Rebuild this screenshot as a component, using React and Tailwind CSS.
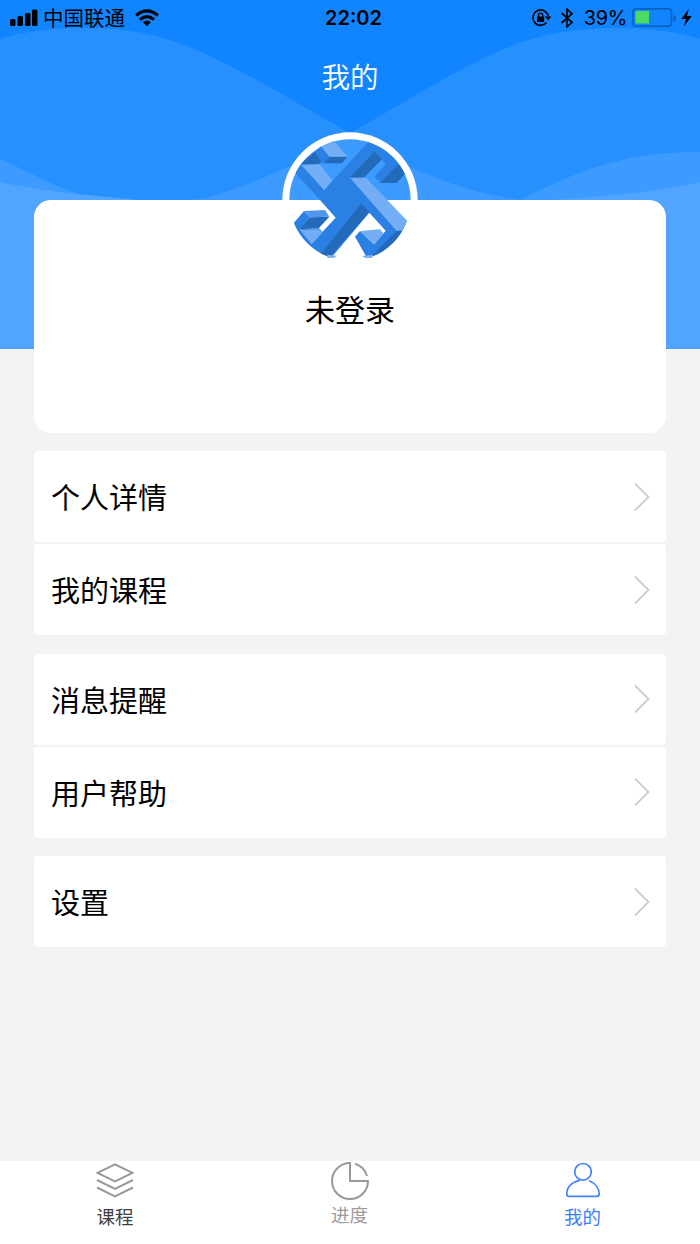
const menuGroups = [
  ["个人详情", "我的课程"],
  ["消息提醒", "用户帮助"],
  ["设置"],
];

function StatusBar() {
  return (
    <div className="flex h-9 items-center justify-between pl-[10px] pr-[8px] text-black">
      <div className="flex flex-1 items-center">
        <svg width="28" height="18" viewBox="0 0 28 18" fill="currentColor">
          <rect x="0" y="10" width="5.5" height="7" rx="1.6" />
          <rect x="7.5" y="7" width="5.5" height="10" rx="1.6" />
          <rect x="15" y="4" width="5.5" height="13" rx="1.6" />
          <rect x="22" y="0.5" width="5.5" height="16.5" rx="1.6" />
        </svg>
        <span className="-mt-0.5 ml-[5px] text-[20.5px] leading-9">中国联通</span>
        <svg className="ml-[10px]" width="24" height="18" viewBox="0 0 24 18">
          <g fill="none" stroke="currentColor" strokeWidth="3.2">
            <path d="M1.2 6.5Q12 -2.8 22.8 6.5" />
            <path d="M5 10.6Q12 4.6 19 10.6" />
          </g>
          <path d="M8 13.2Q12 10 16 13.2L12 17.2Z" fill="currentColor" />
        </svg>
      </div>
      <span className="ml-[5px] font-[Inter,sans-serif] text-[20px] font-semibold leading-9">
        22:02
      </span>
      <div className="flex flex-1 items-center justify-end">
        <svg width="20" height="18" viewBox="0 0 20 18">
          <path
            d="M16.3 7.5A7.7 7.7 0 1 0 14.6 13.6"
            fill="none"
            stroke="currentColor"
            strokeWidth="1.6"
          />
          <path d="M12.8 7.4H19.4L16.1 11.6Z" fill="currentColor" />
          <rect x="5" y="7.5" width="7.2" height="5.6" rx="0.8" fill="currentColor" />
          <path d="M6.5 8V6.2A2.1 2.1 0 0 1 10.7 6.2V8" fill="none" stroke="currentColor" strokeWidth="1.4" />
        </svg>
        <svg
          className="ml-[8px]"
          width="14"
          height="20"
          viewBox="0 0 14 20"
          fill="none"
          stroke="currentColor"
          strokeWidth="1.7"
        >
          <path d="M1.5 5L12 14.3L7 18.8V1.2L12 5.7L1.5 15" />
        </svg>
        <span className="ml-[10px] font-[Inter,sans-serif] text-[20px] leading-9 tracking-[-0.4px]">39%</span>
        <svg className="ml-[5px]" width="45" height="20" viewBox="0 0 45 20">
          <rect x="1" y="0.8" width="38.5" height="17.5" rx="3" fill="none" stroke="#0c5fb6" strokeWidth="1.6" />
          <rect x="3.5" y="3" width="13.5" height="12.5" fill="#4cd964" />
          <path d="M41.5 6.5Q44 7.5 44 10T41.5 13.5Z" fill="#0c5fb6" />
        </svg>
        <svg className="ml-[4px]" width="11" height="18" viewBox="0 0 11 18" fill="currentColor">
          <path d="M7.8 0L0.2 10H5L2.8 17.5L10.8 7H6Z" />
        </svg>
      </div>
    </div>
  );
}

function Waves() {
  return (
    <svg className="absolute inset-x-0 top-0" width="700" height="349" viewBox="0 0 700 349">
      <rect width="700" height="348.5" fill="#1185ff" />
      <path
        d="M0 39C40 26 115 22 170 40C225 58 290 100 350 133C410 100 470 59 525 41C585 22 660 26 700 39V348.5H0Z"
        fill="#2790ff"
      />
      <path
        d="M0 159C30 173 60 188 88 198C120 203 170 203 205 198C250 187 300 160 350 140C400 160 440 188 520 200C575 172 625 151 700 152V348.5H0Z"
        fill="#3d9bff"
      />
      <path d="M0 182C40 191 85 195 150 201H540C600 197 660 192 700 182V348.5H0Z" fill="#52a5ff" />
    </svg>
  );
}

function Avatar() {
  return (
    <svg className="block" width="136" height="136" viewBox="36 36 408 408">
      <defs>
        <clipPath id="face">
          <circle cx="240" cy="240" r="182" />
        </clipPath>
      </defs>
      <circle cx="240" cy="240" r="203" fill="#fff" />
      <g clipPath="url(#face)">
        <rect x="36" y="36" width="408" height="204" fill="#3d9bff" />
        <g fill="#2b80e3">
          <path d="M60 130L97 132L163 210L300 60L350 60L400 132H387L332 188L313 170L347 133L335 118L283 172L410 303V332L330 405L300 430L255 350L270 333L312 373L347 332L298 278L178 420L130 430L50 340L72 308L102 273L120 292L90 328L148 325L157 336L197 293L150 240L74 157Z" />
          <path d="M135 97L152 78L178 110L160 128H152Z" />
        </g>
        <g fill="#236abb">
          <path d="M90 133L135 95L154 125L146 133Z" />
          <path d="M178 110H232L216 130H160Z" />
          <path d="M240 172L313 95L335 118L283 172Z" />
          <path d="M385 132H400L412 155L380 189H331Z" />
          <path d="M274 250L298 276L172 420L146 410Z" />
          <path d="M120 292L178 290L146 325L88 328Z" />
          <path d="M379 332H420L360 410L295 420Z" />
        </g>
        <g fill="#73adf5">
          <path d="M153 78L190 60L232 110H178Z" />
          <path d="M94 135L149 133L187 181L163 211Z" />
          <path d="M240 173H288L414 305L400 332H379Z" />
          <path d="M270 333L330 328L340 340L312 373Z" />
          <path d="M90 330L148 328L157 338L125 373Z" />
        </g>
        <path d="M102 273L165 270L178 290L120 292Z" fill="#5096ec" />
        <path d="M36 416H444V444H36Z" fill="#fff" />
      </g>
      <path d="M172 404L200 407L192 414H172Z" fill="#7fb2ef" />
      <path d="M308 404L276 408L286 414H306Z" fill="#7fb2ef" />
    </svg>
  );
}

function MenuItem({ label }) {
  return (
    <button
      type="button"
      className="flex h-[91px] w-full items-center justify-between rounded-[4px] bg-white pl-[17px] pr-4"
    >
      <span className="-mt-px text-[29px] leading-[44px] text-black">{label}</span>
      <svg width="16" height="28" viewBox="0 0 16 28" fill="none" stroke="#cccccc" strokeWidth="1.8">
        <path d="M1 0.5L14.5 14L1 27.5" />
      </svg>
    </button>
  );
}

function TabBar() {
  return (
    <nav className="mt-auto flex h-[83px] bg-white pr-[4px] text-[18.5px] leading-6">
      <a className="flex w-[230px] flex-col items-center text-[#3f3f3f]">
        <svg className="mt-[2px]" width="38" height="38" viewBox="0 0 38 38" fill="none" stroke="#999999" strokeWidth="2">
          <path d="M1.5 9.8L19 1.3L36.5 9.8L19 18.3Z" />
          <path d="M1 17L19 25.8L37 17" />
          <path d="M1 24.5L19 33.3L37 24.5" />
        </svg>
        <span className="mt-[3px]">课程</span>
      </a>
      <a className="flex w-[239px] flex-col items-center text-[#9c9c9c]">
        <svg width="40" height="40" viewBox="0 0 40 40" fill="none" stroke="#999999" strokeWidth="2">
          <path d="M20 2A18 18 0 1 0 38 20H20Z" />
          <path d="M25 2.8A18 18 0 0 1 37 15" />
        </svg>
        <span className="mt-px">进度</span>
      </a>
      <a className="flex flex-1 flex-col items-center text-[#3a7efa]">
        <svg className="mt-[1px]" width="36" height="38" viewBox="0 0 36 38" fill="none" stroke="#3f82fa" strokeWidth="1.7">
          <circle cx="18" cy="9.8" r="8.3" />
          <path d="M15 18.3C7 20 1.8 25 1.8 32Q1.8 34.3 4 34.3H32Q34.2 34.3 34.2 32C34 26 30 20.8 24 18.8" />
        </svg>
        <span className="mt-1">我的</span>
      </a>
    </nav>
  );
}

export default function App() {
  return (
    <div className="relative flex h-[1244px] w-[700px] flex-col overflow-hidden bg-[#f2f3f5] font-['Noto_Sans_CJK_SC',sans-serif]">
      <Waves />
      <header className="relative h-[132px]">
        <StatusBar />
        <h1 className="mt-[18px] text-center text-[28.5px] font-[350] leading-[44px] text-white">我的</h1>
      </header>

      <main className="relative px-[34px] pt-[68px]">
        <section className="relative h-[233px] rounded-[17px] bg-white pt-[86px] text-center">
          <div className="absolute left-[248px] -top-[68px]">
            <Avatar />
          </div>
          <p className="relative text-[30px] leading-[44px] text-black">未登录</p>
        </section>

        <div className="mt-[18px] flex flex-col gap-[18.5px]">
          {menuGroups.map((group) => (
            <div key={group[0]} className="flex flex-col gap-[2px]">
              {group.map((label) => (
                <MenuItem key={label} label={label} />
              ))}
            </div>
          ))}
        </div>
      </main>

      <TabBar />
    </div>
  );
}
